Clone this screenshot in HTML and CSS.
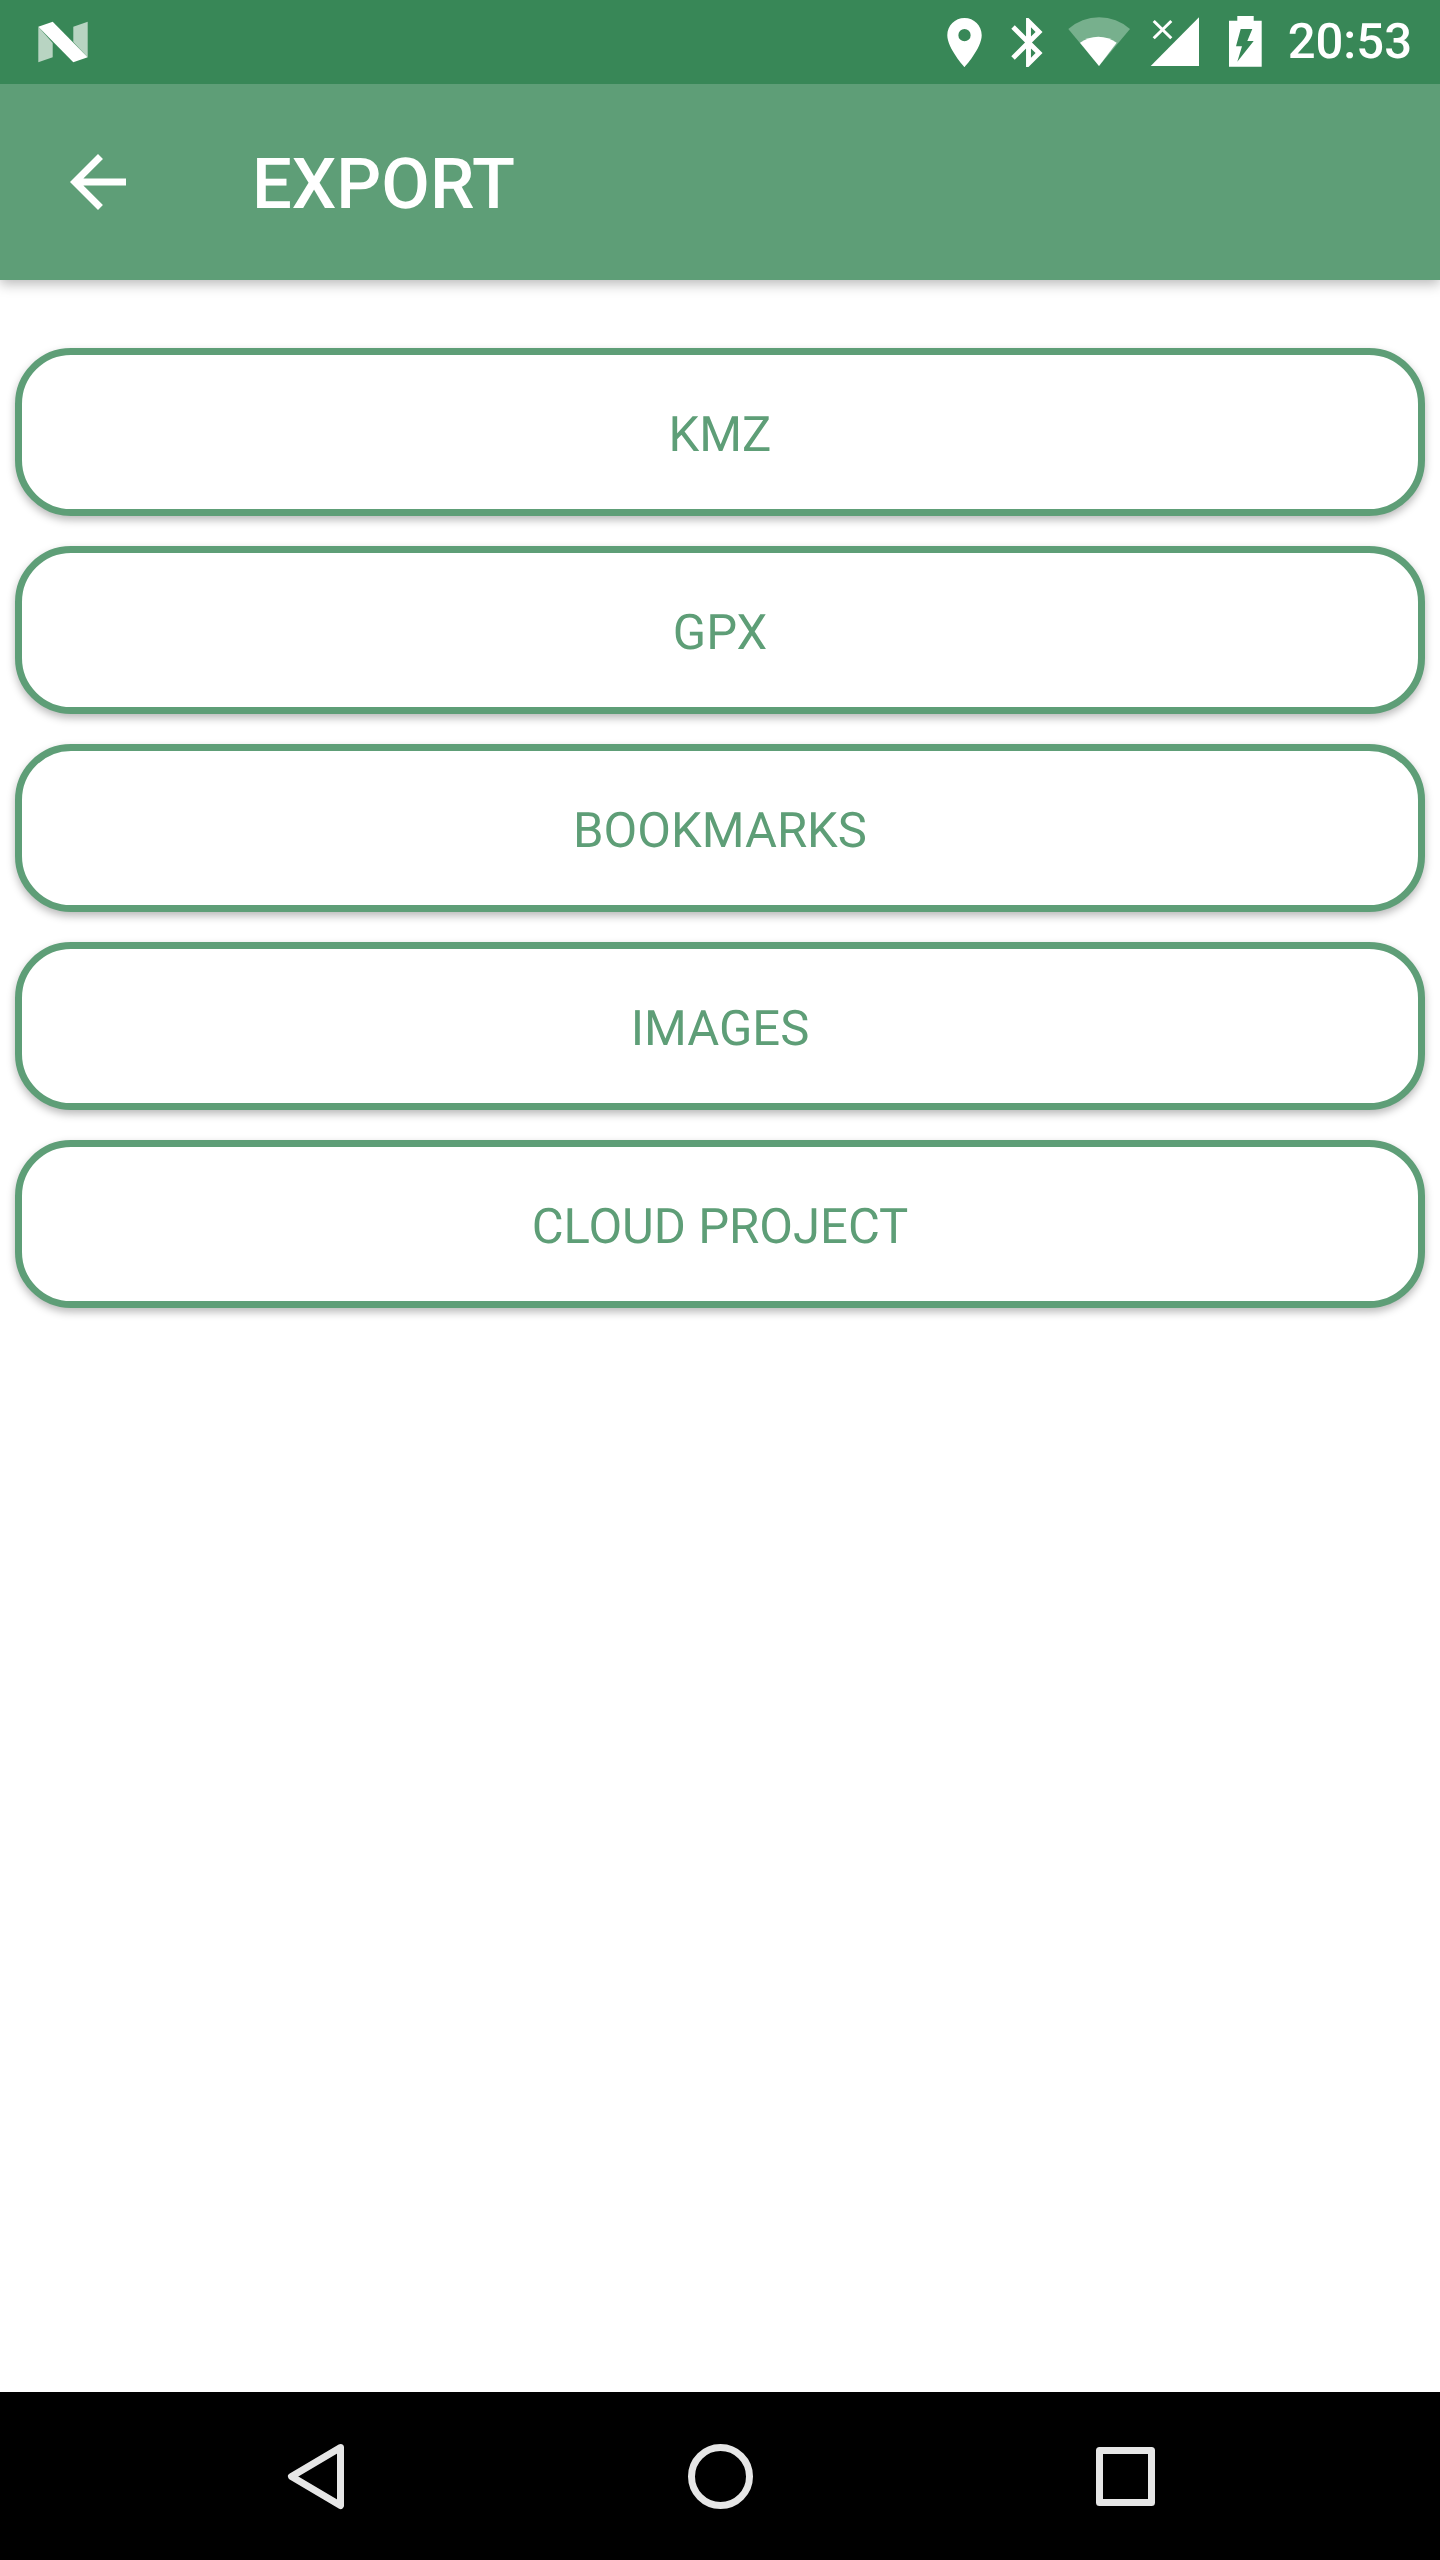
FILE: index.html
```html
<!DOCTYPE html>
<html lang="en">
<head>
<meta charset="utf-8">
<title>Export</title>
<link rel="stylesheet" href="styles.css">
</head>
<body>
<div class="screen">
  <header class="top">
    <div class="status">
      <svg class="ic-logo" viewBox="33 0 60 84">
        <path class="pale" d="M38.3 26.7L52.7 43V57.3L38.3 62.3Z"/>
        <path class="pale" d="M73.3 26.7L87.7 21.7V57.3L73.3 42Z"/>
        <path class="solid" d="M38.3 26.7L52.7 21.7L87.7 57.3L73.3 62.3Z"/>
      </svg>
      <div class="status-right">
        <svg class="ic-24" viewBox="0 0 24 24"><path class="solid" d="M12 2C8.13 2 5 5.13 5 9c0 5.25 7 13 7 13s7-7.75 7-13c0-3.87-3.13-7-7-7zm0 9.5a2.5 2.5 0 0 1 0-5 2.5 2.5 0 0 1 0 5z"/></svg>
        <svg class="ic-24 ic-bt" viewBox="0 0 24 24"><path class="solid" fill-rule="evenodd" d="M17.71 7.71L12 2h-1v7.59L6.41 5 5 6.41 10.59 12 5 17.59 6.41 19 11 14.41V22h1l5.71-5.71-4.3-4.29 4.3-4.29zM13 5.83l1.88 1.88L13 9.59V5.83zm1.88 10.46L13 18.17v-3.76l1.88 1.88z"/></svg>
        <svg class="ic-wifi" viewBox="1064 0 70 84">
          <path class="wifi-dim" d="M1099 66L1068.3 29A46.5 46.5 0 0 1 1130 29Z"/>
          <path class="solid" d="M1099 66L1080 42.7A31 31 0 0 1 1116.7 42.7Z"/>
        </svg>
        <svg class="ic-signal" viewBox="1148 0 54 84">
          <path class="solid" d="M1150.7 66H1199V17.3Z"/>
          <path class="cross" d="M1153.7 21L1171.3 38.3M1171.3 21L1153.7 38.3"/>
        </svg>
        <svg class="ic-battery" viewBox="1226 0 38 84">
          <path class="solid" d="M1237.3 16H1253.7V20.7H1261.7V66.7H1229V20.7H1237.3Z"/>
          <path class="bolt" d="M1240.7 29H1252.3L1247.3 41H1253.7L1237.3 61.7L1242 46.3H1236Z"/>
        </svg>
        <span class="clock">20:53</span>
      </div>
    </div>
    <div class="appbar">
      <svg class="ic-back" viewBox="0 0 24 24"><path class="solid" d="M20 11H7.83l5.59-5.59L12 4l-8 8 8 8 1.41-1.41L7.83 13H20v-2z"/></svg>
      <h1 class="title">EXPORT</h1>
    </div>
  </header>
  <main class="list">
    <button class="btn" type="button">KMZ</button>
    <button class="btn" type="button">GPX</button>
    <button class="btn" type="button">BOOKMARKS</button>
    <button class="btn" type="button">IMAGES</button>
    <button class="btn" type="button">CLOUD PROJECT</button>
  </main>
  <nav class="nav">
    <svg class="nav-ic" viewBox="274 2434 84 84"><path class="nav-line" d="M340.5 2447.5L291.5 2476.5L340.5 2505.5Z"/></svg>
    <svg class="nav-ic" viewBox="678 2434 84 84"><circle class="nav-line" cx="720.5" cy="2476.5" r="29"/></svg>
    <svg class="nav-ic" viewBox="1082 2434 84 84"><rect class="nav-line" x="1099.5" y="2450.5" width="52" height="52"/></svg>
  </nav>
</div>
</body>
</html>
```
FILE: styles.css
```css
* { box-sizing: border-box; }
html, body { margin: 0; padding: 0; background: #fff; }
body { font-family: Roboto, "Liberation Sans", sans-serif; text-rendering: geometricPrecision; }
.screen { width: 1440px; height: 2560px; display: flex; flex-direction: column; overflow: hidden; }
.top { position: relative; z-index: 1; box-shadow: 0 4px 12px rgba(0,0,0,.28); }
.status { height: 84px; background: #388757; display: flex; align-items: stretch; padding-left: 33px; }
.status-right { margin-left: auto; display: flex; align-items: stretch; padding-right: 28px; }
.status svg { display: block; flex: none; height: 84px; }
.ic-logo { width: 60px; }
.status .ic-24 { width: 59px; height: 59px; align-self: center; }
.ic-bt { margin-left: 5px; }
.ic-wifi { width: 70px; margin-left: 6px; }
.ic-signal { width: 54px; margin-left: 14px; }
.ic-battery { width: 38px; margin-left: 24px; }
.clock { color: #fff; font-size: 49px; font-weight: 500; line-height: 84px; margin-left: 24px; }
.solid { fill: #fff; }
.pale { fill: #b8d4c2; }
.wifi-dim { fill: #77b08d; }
.cross { fill: none; stroke: #fff; stroke-width: 3; }
.bolt { fill: #388757; }
.appbar { height: 196px; background: #5e9e77; display: flex; align-items: center; padding-left: 56px; }
.ic-back { width: 84px; height: 84px; display: block; flex: none; }
.title { margin: 6px 0 0 112px; color: #fff; font-size: 70.5px; font-weight: 500; line-height: 1; }
.list { flex: 1; display: flex; flex-direction: column; gap: 30px; padding: 68px 15px 0; }
.btn { height: 168px; padding: 4px 0 0; border: 7px solid #5e9e77; border-radius: 56px; background: #fff; color: #5e9e77; font: 400 49px Roboto, sans-serif; text-rendering: geometricPrecision; box-shadow: 0 4px 9px rgba(0,0,0,.28); }
.nav { height: 168px; background: #000; display: flex; align-items: flex-start; gap: 320px; padding: 42px 0 0 274px; }
.nav-ic { width: 84px; height: 84px; display: block; flex: none; }
.nav-line { fill: none; stroke: #e6e6e6; stroke-width: 7; stroke-linejoin: round; }
```
